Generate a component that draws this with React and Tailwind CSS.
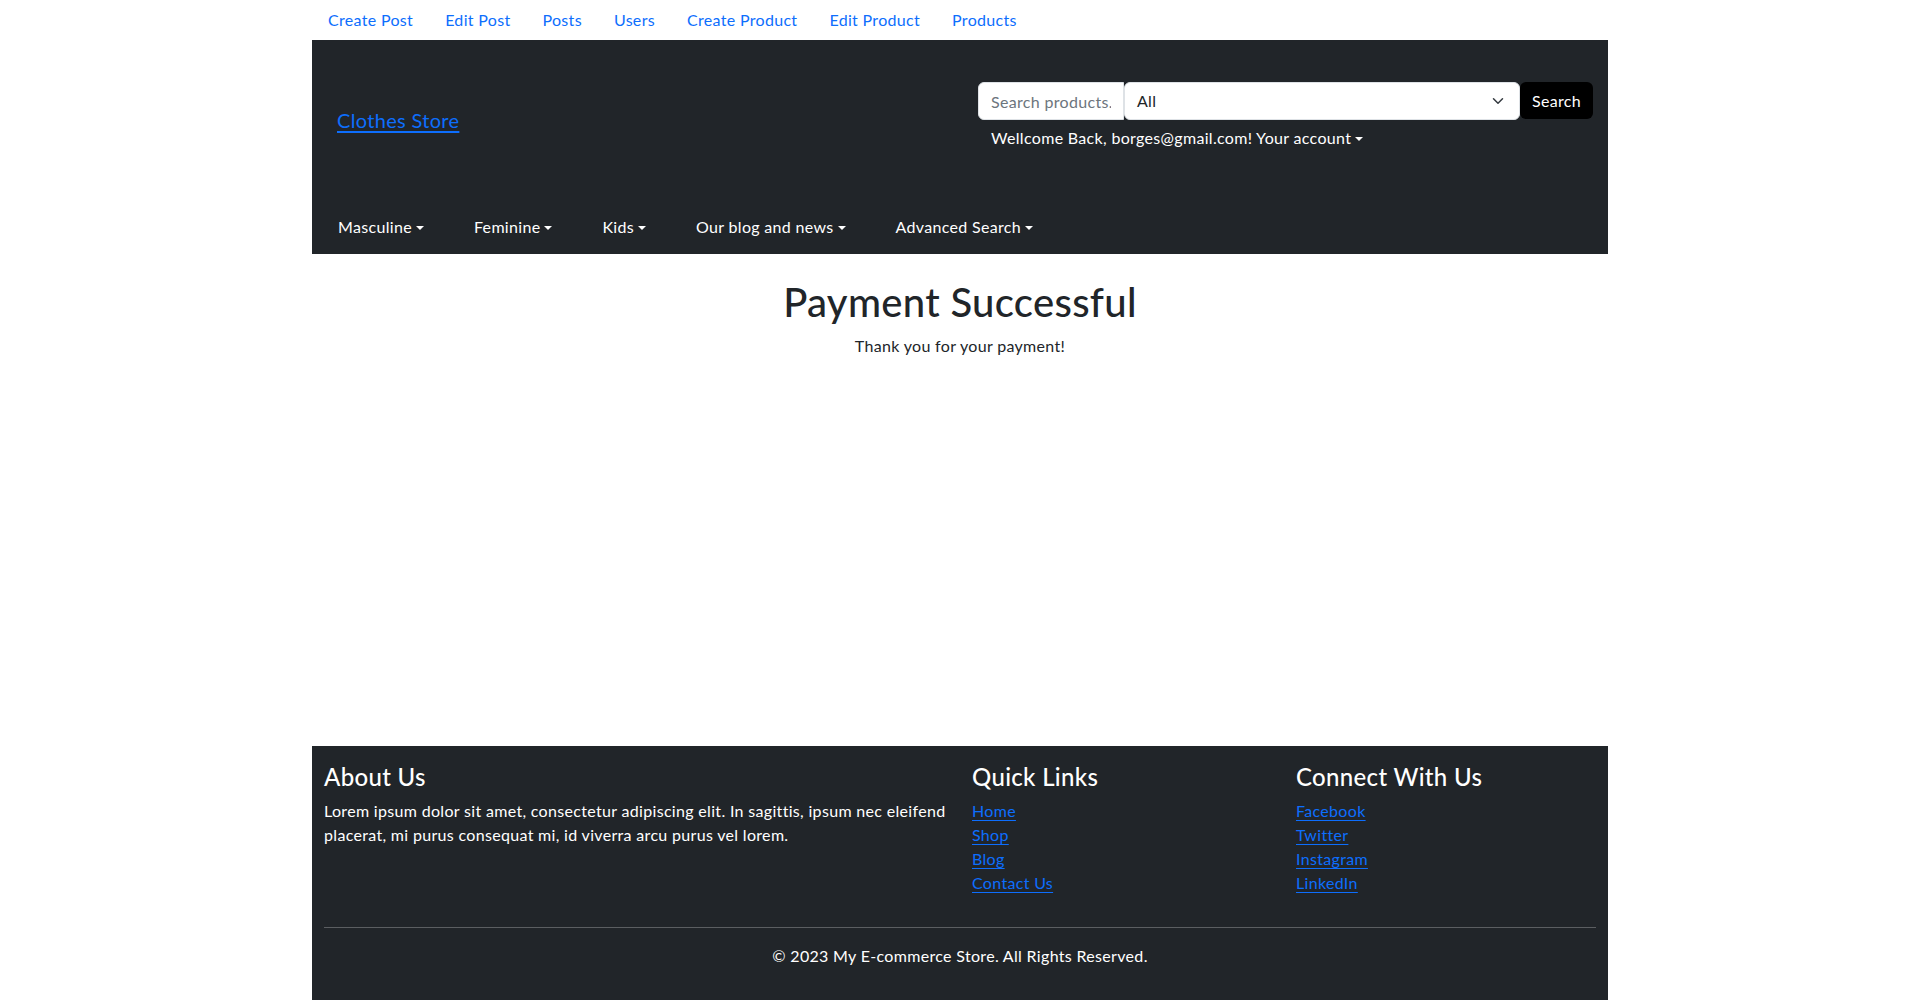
// Página de confirmação de pagamento: barra de admin, cabeçalho escuro, mensagem e rodapé.
const adminLinks = ['Create Post', 'Edit Post', 'Posts', 'Users', 'Create Product', 'Edit Product', 'Products'];
const categories = ['Masculine', 'Feminine', 'Kids', 'Our blog and news', 'Advanced Search'];
const quickLinks = ['Home', 'Shop', 'Blog', 'Contact Us'];
const socialLinks = ['Facebook', 'Twitter', 'Instagram', 'LinkedIn'];

function Caret() {
  return <span className="inline-block ml-[4px] align-[3px] border-t-[4px] border-x-[4px] border-t-current border-x-transparent border-b-0"></span>;
}

function Header() {
  return (
    <header className="bg-[#212529] h-[214px] flex flex-col">
      <div className="flex items-start pt-[42px]">
        <a href="#" className="ml-[25px] mt-[23px] text-[20px] leading-[30px] text-[#0d6efd] underline underline-offset-[3px]">Clothes Store</a>
        <div className="ml-auto mr-[15px] w-[615px]">
          <form className="flex h-[38px]">
            <input
              className="w-[146px] h-[38px] bg-white border border-[#dee2e6] rounded-l-md px-3 text-[16px] tracking-[0.02em] text-[#212529] placeholder:text-[#6c757d] outline-none"
              placeholder="Search products..."
            />
            <div className="flex-1 h-[38px] bg-white border border-[#dee2e6] rounded-md flex items-center pl-3 pr-[13px] text-[16px] text-[#212529]">
              <span>All</span>
              <svg className="ml-auto" width="16" height="12" viewBox="0 0 16 16" fill="none" stroke="#343a40" strokeWidth="2" strokeLinecap="round" strokeLinejoin="round">
                <path d="m2 5 6 6 6-6" />
              </svg>
            </div>
            <button type="button" className="w-[73px] h-[37px] bg-black text-white text-[16px] tracking-[0.02em] rounded-md">Search</button>
          </form>
          <div className="mt-[6px] ml-[13px] text-white text-[16px] leading-[24px]">
            Wellcome Back, borges@gmail.com! Your account<Caret />
          </div>
        </div>
      </div>
      <nav className="mt-auto mb-[15px] ml-[26px] flex gap-[50px] text-white text-[16px] leading-[24px]">
        {categories.map((c) => (
          <span key={c}>{c}<Caret /></span>
        ))}
      </nav>
    </header>
  );
}

function Footer() {
  return (
    <footer className="bg-[#212529] text-white px-3 pt-4 pb-4">
      <div className="flex">
        <div className="w-[636px] pr-3">
          <h4 className="text-[24px] leading-[29px] font-medium mb-2">About Us</h4>
          <p className="text-[16px] leading-[24px] mb-4">
            Lorem ipsum dolor sit amet, consectetur adipiscing elit. In sagittis, ipsum nec eleifend placerat, mi purus consequat mi, id viverra arcu purus vel lorem.
          </p>
        </div>
        <div className="w-[324px] px-3">
          <h4 className="text-[24px] leading-[29px] font-medium mb-2">Quick Links</h4>
          <ul className="mb-4 text-[16px] leading-[24px]">
            {quickLinks.map((l) => (
              <li key={l}><a href="#" className="text-[#0d6efd] underline underline-offset-[3px]">{l}</a></li>
            ))}
          </ul>
        </div>
        <div className="w-[312px] pl-3">
          <h4 className="text-[24px] leading-[29px] font-medium mb-2">Connect With Us</h4>
          <ul className="mb-4 text-[16px] leading-[24px]">
            {socialLinks.map((l) => (
              <li key={l}><a href="#" className="text-[#0d6efd] underline underline-offset-[3px]">{l}</a></li>
            ))}
          </ul>
        </div>
      </div>
      <hr className="my-4 border-t border-[#5b5e61]" />
      <p className="text-center text-[16px] leading-[24px] mb-4">© 2023 My E-commerce Store. All Rights Reserved.</p>
    </footer>
  );
}

export default function App() {
  return (
    <div className="bg-white min-h-screen font-['Lato',sans-serif] tracking-[0.02em] text-[#212529]">
      <div className="w-[1296px] mx-auto">
        <nav className="flex h-[40px] items-center text-[16px] leading-[24px]">
          {adminLinks.map((l) => (
            <a key={l} href="#" className="px-4 text-[#0d6efd]">{l}</a>
          ))}
        </nav>
        <Header />
        <main className="h-[492px] text-center pt-6">
          <h1 className="text-[40px] leading-[48px] font-medium mb-2">Payment Successful</h1>
          <p className="text-[16px] leading-[24px]">Thank you for your payment!</p>
        </main>
        <Footer />
      </div>
    </div>
  );
}
